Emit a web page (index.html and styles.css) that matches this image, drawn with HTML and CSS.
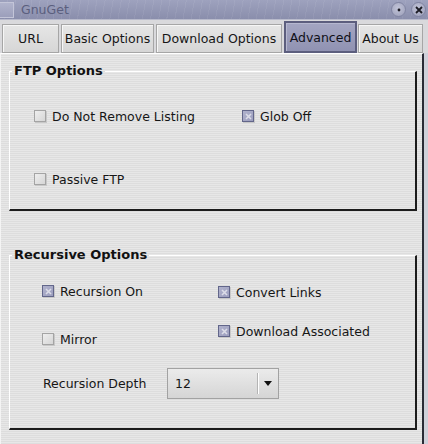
FILE: index.html
```html
<!DOCTYPE html>
<html>
<head>
<meta charset="utf-8">
<title>GnuGet</title>
<link rel="stylesheet" href="styles.css">
</head>
<body>
<div class="window">
  <div class="titlebar">
    <span class="title-icon"></span>
    <span class="title">GnuGet</span>
    <div class="controls">
      <span class="ctl"><svg width="8" height="8" viewBox="0 0 8 8"><circle cx="4" cy="4" r="1.4" fill="#1c1c24"/></svg></span>
      <span class="ctl"><svg width="8" height="8" viewBox="0 0 8 8"><path d="M1 1L7 7M7 1L1 7" stroke="#1c1c24" stroke-width="1.8"/></svg></span>
    </div>
  </div>

  <div class="tabs">
    <div class="tab tab-url">URL</div>
    <div class="tab tab-basic">Basic Options</div>
    <div class="tab tab-download">Download Options</div>
    <div class="tab tab-advanced active">Advanced</div>
    <div class="tab tab-about">About Us</div>
  </div>

  <div class="panel">
    <fieldset class="group ftp">
      <legend>FTP Options</legend>
      <div class="ftp-grid">
        <label class="opt"><span class="box"></span>Do Not Remove Listing</label>
        <label class="opt"><span class="box on"><svg width="7" height="7" viewBox="0 0 7 7"><path d="M1 1L6 6M6 1L1 6" stroke="#dcdde8" stroke-width="1.6"/></svg></span>Glob Off</label>
        <label class="opt"><span class="box"></span>Passive FTP</label>
      </div>
    </fieldset>

    <fieldset class="group rec">
      <legend>Recursive Options</legend>
      <div class="rec-cols">
        <div class="col col-left">
          <label class="opt"><span class="box on"><svg width="7" height="7" viewBox="0 0 7 7"><path d="M1 1L6 6M6 1L1 6" stroke="#dcdde8" stroke-width="1.6"/></svg></span>Recursion On</label>
          <label class="opt opt-mirror"><span class="box"></span>Mirror</label>
          <div class="depth">
            <span class="depth-label">Recursion Depth</span>
            <div class="combo">
              <span class="combo-value">12</span>
              <span class="combo-sep"></span>
              <span class="combo-arrow"></span>
            </div>
          </div>
        </div>
        <div class="col col-right">
          <label class="opt"><span class="box on"><svg width="7" height="7" viewBox="0 0 7 7"><path d="M1 1L6 6M6 1L1 6" stroke="#dcdde8" stroke-width="1.6"/></svg></span>Convert Links</label>
          <label class="opt opt-assoc"><span class="box on"><svg width="7" height="7" viewBox="0 0 7 7"><path d="M1 1L6 6M6 1L1 6" stroke="#dcdde8" stroke-width="1.6"/></svg></span>Download Associated</label>
        </div>
      </div>
    </fieldset>
  </div>
</div>
</body>
</html>
```

FILE: styles.css
```css
* { box-sizing: border-box; }

body {
  margin: 0;
  font-family: "DejaVu Sans", "Liberation Sans", sans-serif;
  font-size: 12.5px;
  color: #161616;
}

.window {
  width: 428px;
  height: 444px;
  display: flex;
  flex-direction: column;
  background: #cfd0da;
  overflow: hidden;
}

/* ---- title bar ---- */
.titlebar {
  flex: none;
  height: 20px;
  display: flex;
  align-items: center;
  background:
    repeating-linear-gradient(100deg, rgba(255,255,255,0) 0 7px, rgba(255,255,255,0.06) 7px 8px),
    linear-gradient(#9ea2be, #8a8eac);
  border-bottom: 1px solid #b8bacb;
}

.title-icon {
  width: 14px;
  height: 16px;
  background: linear-gradient(#b1b4cc, #9c9fbb);
  border: 1px solid #c3c5d8;
  border-left: none;
}

.title {
  margin-left: 7px;
  color: #5b5f7e;
  font-size: 12.5px;
}

.controls {
  margin-left: auto;
  margin-right: 2px;
  display: flex;
  gap: 5px;
}

.ctl {
  width: 15px;
  height: 15px;
  border-radius: 50%;
  display: grid;
  place-items: center;
  background: radial-gradient(circle at 45% 40%, #c2c4d8, #9a9db8);
  border: 1px solid #8084a2;
}

/* ---- tab strip ---- */
.tabs {
  flex: none;
  height: 33px;
  display: flex;
  align-items: flex-start;
  gap: 2px;
  padding-left: 2px;
  background: #d9d9dc;
}

.tab {
  height: 29px;
  margin-top: 4px;
  display: flex;
  align-items: center;
  justify-content: center;
  white-space: nowrap;
  background: linear-gradient(#e6e6e6, #d6d6d6);
  border: 1px solid #a6a6a6;
  box-shadow: inset 1px 1px 0 #f6f6f6;
}

.tab-url { width: 57px; }
.tab-basic { width: 93px; }
.tab-download { width: 126px; }
.tab-advanced { width: 73px; }
.tab-about { width: 65px; margin-left: -1px; }

.tab.active {
  height: 32px;
  margin-top: 1px;
  background: linear-gradient(#a4a6c2, #9092b2);
  border: 2px solid #5c5e7e;
  box-shadow: inset 1px 1px 0 #b6b8d0;
  color: #101018;
}

/* ---- notebook page ---- */
.panel {
  flex: 1;
  margin-right: 4px;
  padding: 9px 0 0 8px;
  border-top: 1px solid #ffffff;
  border-left: 1px solid #f4f4f4;
  border-right: 2px solid #2a2b36;
  background: repeating-linear-gradient(#e7e7e7 0 1px, #dddddd 1px 2px);
}

.group {
  width: 408px;
  margin: 0;
  padding: 0;
  min-width: 0;
  border-style: solid;
  border-width: 1px 2px 2px 1px;
  border-color: #ffffff #1c1c1c #1c1c1c #ffffff;
}

.group legend {
  margin-left: 2px;
  padding: 0 2px;
  font-weight: bold;
  font-size: 13px;
  line-height: 16px;
  color: #111111;
}

.opt {
  height: 18px;
  display: flex;
  align-items: center;
  gap: 6px;
  white-space: nowrap;
}

.box {
  flex: none;
  width: 12px;
  height: 12px;
  display: grid;
  place-items: center;
  border: 1px solid #a4a4a4;
  background: linear-gradient(135deg, #eeeeee, #d6d6d6);
  box-shadow: 1px 1px 0 #c8c8c8;
}

.box.on {
  border-color: #62668a;
  background: linear-gradient(135deg, #b0b2cc, #9c9ebe);
}

/* FTP group */
.ftp-grid {
  display: grid;
  grid-template-columns: 208px auto;
  row-gap: 45px;
  padding: 28px 0 21px 24px;
}

/* Recursive group */
.rec {
  margin-top: 36px;
}

.rec-cols {
  display: flex;
  padding: 19px 0 29px 32px;
}

.col {
  display: flex;
  flex-direction: column;
}

.col-left { flex: none; width: 176px; }
.opt-mirror { margin-top: 30px; }
.col-right { padding-top: 1px; }
.opt-assoc { margin-top: 21px; }

.depth {
  margin-top: 20px;
  display: flex;
  align-items: center;
}

.depth-label {
  flex: none;
  width: 125px;
  padding-left: 1px;
  white-space: nowrap;
}

.combo {
  flex: none;
  width: 112px;
  height: 31px;
  display: flex;
  align-items: center;
  padding-left: 7px;
  border: 1px solid #a2a2a2;
  background: linear-gradient(#ebebeb, #d5d5d5);
}

.combo-value { flex: 1; }

.combo-sep {
  width: 2px;
  height: 21px;
  border-left: 1px solid #b4b4b4;
  border-right: 1px solid #ffffff;
}

.combo-arrow {
  width: 0;
  height: 0;
  margin: 0 6px 0 5px;
  border-left: 4.5px solid transparent;
  border-right: 4.5px solid transparent;
  border-top: 5px solid #111111;
}
```
